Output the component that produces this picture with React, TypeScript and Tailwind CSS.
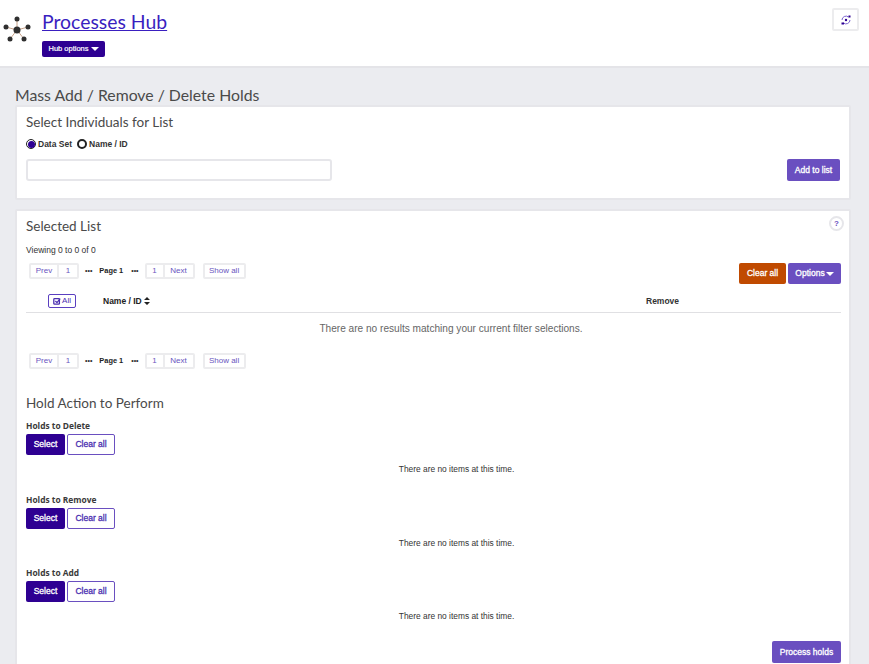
import React from "react";

const heading = "font-['Lato',sans-serif] font-normal text-[#4a4a4a]";
const btnText = "text-[8.5px] font-normal [-webkit-text-stroke:0.3px]";

function Pager() {
  const cell = "h-[12px] flex items-center justify-center text-[8px] text-[#6a55c0]";
  return (
    <div className="flex items-center h-[16px] ml-[3px]">
      <div className="flex border-2 border-[#ececee] rounded-[2px] box-content">
        <div className={`${cell} w-[28px] border-r-2 border-[#ececee]`}>Prev</div>
        <div className={`${cell} w-[18px]`}>1</div>
      </div>
      <span className="ml-[6px] text-[7px] font-bold text-[#333]">•••</span>
      <span className="ml-[7px] text-[7.4px] font-bold text-[#222]">Page 1</span>
      <span className="ml-[8px] text-[7px] font-bold text-[#333]">•••</span>
      <div className="ml-[6px] flex border-2 border-[#ececee] rounded-[2px] box-content">
        <div className={`${cell} w-[18px] border-r-2 border-[#ececee]`}>1</div>
        <div className={`${cell} w-[28px]`}>Next</div>
      </div>
      <div className={`${cell} ml-[8px] w-[39px] border-2 border-[#ececee] rounded-[2px] box-content`}>Show all</div>
    </div>
  );
}

function Caret({ className = "" }: { className?: string }) {
  return <span className={`inline-block w-0 h-0 border-x-[4px] border-x-transparent border-t-[4px] border-t-white ${className}`} />;
}

function HoldGroup({ title }: { title: string }) {
  return (
    <div className="h-[73.5px]">
      <div className="text-[8.4px] font-bold text-[#3a3a3a] leading-[12px] font-['Open_Sans',sans-serif]">{title}</div>
      <div className="flex gap-[2px] mt-[2px]">
        <button className={`w-[39px] h-[21px] bg-[#2e0092] text-white rounded-[2px] ${btnText}`}>Select</button>
        <button className={`w-[48px] h-[21px] bg-white border border-[#6a4fc0] text-[#4a2fb0] rounded-[2px] ${btnText}`}>Clear all</button>
      </div>
      <div className="text-center text-[8.4px] text-[#333] mt-[8px] leading-[12px] pl-[47px]">There are no items at this time.</div>
    </div>
  );
}

export default function App() {
  return (
    <div className="w-[869px] h-[664px] overflow-hidden bg-[#ebecf0] font-['Liberation_Sans',sans-serif]">
      <header className="h-[68px] bg-white border-b-2 border-[#e4e4e8] flex justify-between">
        <div className="flex">
          <svg width="30" height="30" viewBox="0 0 30 30" className="ml-[2px] mt-[15px]">
            <g stroke="#b98a6a" strokeWidth="0.8">
              <line x1="15" y1="15" x2="15" y2="4" />
              <line x1="15" y1="15" x2="26" y2="12" />
              <line x1="15" y1="15" x2="22" y2="24" />
              <line x1="15" y1="15" x2="8" y2="24" />
              <line x1="15" y1="15" x2="4" y2="12" />
            </g>
            <g fill="#2f2f2f">
              <circle cx="15" cy="15" r="3.5" />
              <circle cx="15" cy="4" r="2.5" />
              <circle cx="26" cy="12" r="2.5" />
              <circle cx="22" cy="24" r="2.5" />
              <circle cx="8" cy="24" r="2.5" />
              <circle cx="4" cy="12" r="2.5" />
            </g>
          </svg>
          <div className="ml-[10px] pt-[10px]">
            <a href="#" className="block text-[19.4px] leading-[24px] text-[#3a1fc0] underline font-['Lato',sans-serif]">Processes Hub</a>
            <button className="mt-[7px] h-[16px] w-[63px] bg-[#2e0092] rounded-[2px] text-white text-[7.5px] font-normal [-webkit-text-stroke:0.2px] flex items-center justify-center gap-[2px]">
              Hub options <Caret />
            </button>
          </div>
        </div>
        <button className="mt-[8px] mr-[10px] w-[27px] h-[23px] border-2 border-[#ececee] rounded-[2px] flex items-center justify-center">
          <svg width="12" height="12" viewBox="0 0 12 12" fill="none">
            <path d="M2 6a4 4 0 0 1 6.5-3M10 6a4 4 0 0 1-6.5 3" stroke="#7a63cf" strokeWidth="1" />
            <circle cx="6" cy="6" r="1.2" fill="#2e0092" />
            <rect x="8.5" y="1.5" width="2" height="2" fill="#2e0092" />
            <rect x="1.5" y="8.5" width="2.5" height="2" fill="#2e0092" />
          </svg>
        </button>
      </header>

      <main className="pl-[15px] pr-[18px]">
        <h1 className={`${heading} text-[15.8px] leading-[20px] pt-[17px] h-[37px]`}>Mass Add / Remove / Delete Holds</h1>

        <section className="h-[95px] bg-white border-2 border-[#e6e6ea] rounded-[2px] px-[9px] relative">
          <h2 className={`${heading} text-[13.5px] leading-[18px] pt-[6px] h-[23px]`}>Select Individuals for List</h2>
          <div className="flex items-center mt-[8px] h-[12px] text-[8.5px] font-bold text-[#333]">
            <span className="w-[10px] h-[10px] rounded-full border-[1.5px] border-[#222] flex items-center justify-center">
              <span className="w-[7px] h-[7px] rounded-full bg-[#2e0092]" />
            </span>
            <span className="ml-[2px]">Data Set</span>
            <span className="ml-[5px] w-[10px] h-[10px] rounded-full border-2 border-[#222]" />
            <span className="ml-[2px]">Name / ID</span>
          </div>
          <div className="flex justify-between items-center mt-[9px]">
            <input className="w-[306px] h-[22px] bg-white border-2 border-[#e6e6ea] rounded-[3px]" />
            <button className={`w-[53px] h-[22px] bg-[#6a4fc0] text-white rounded-[2px] ${btnText}`}>Add to list</button>
          </div>
        </section>

        <section className="mt-[9px] h-[470px] bg-white border-2 border-[#e6e6ea] rounded-[2px] px-[9px] relative">
          <h2 className={`${heading} text-[13.5px] leading-[18px] pt-[6px] h-[23px]`}>Selected List</h2>
          <span className="absolute right-[5px] top-[5px] w-[15px] h-[15px] rounded-full border-2 border-[#e6e6ea] flex items-center justify-center text-[8px] font-bold text-[#6a4fc0]">?</span>
          <div className="text-[8.5px] text-[#333] leading-[12px] mt-[10px]">Viewing 0 to 0 of 0</div>
          <div className="flex justify-between items-start mt-[7px]">
            <Pager />
            <div className="flex gap-[2px] mr-[-1px]">
              <button className={`w-[47px] h-[21px] bg-[#c04a00] text-white rounded-[2px] ${btnText}`}>Clear all</button>
              <button className={`w-[53px] h-[21px] bg-[#6a4fc0] text-white rounded-[2px] flex items-center justify-center gap-[1px] ${btnText}`}>Options <Caret /></button>
            </div>
          </div>
          <div className="flex items-center h-[23px] mt-[6px] border-b border-[#e0e0e3] mr-[-1px] relative">
            <button className="ml-[22px] w-[28px] h-[14px] border border-[#5a3fc0] rounded-[2px] flex items-center justify-center gap-[1px] text-[8px] text-[#4a2fb0]">
              <svg width="8" height="8" viewBox="0 0 10 10" fill="none" stroke="#4a2fb0" strokeWidth="1.6">
                <rect x="1" y="2" width="7" height="7" rx="1" />
                <path d="M3 5l2 2 4-5" />
              </svg>
              All
            </button>
            <span className="ml-[27px] text-[8.5px] font-bold text-[#222] flex items-center gap-[2px]">
              Name / ID
              <svg width="6" height="8" viewBox="0 0 6 8" fill="#222"><path d="M3 0l3 3H0zM3 8L0 5h6z" /></svg>
            </span>
            <span className="absolute left-[620px] text-[8.5px] font-bold text-[#333]">Remove</span>
          </div>
          <div className="h-[32px] flex items-center justify-center text-[10.1px] text-[#666] pl-[36px]">There are no results matching your current filter selections.</div>
          <div className="mt-[8px]"><Pager /></div>
          <h2 className={`${heading} text-[13.5px] leading-[18px] mt-[25px]`}>Hold Action to Perform</h2>
          <div className="mt-[8px]">
            <HoldGroup title="Holds to Delete" />
            <HoldGroup title="Holds to Remove" />
            <HoldGroup title="Holds to Add" />
          </div>
          <button className={`absolute right-[8px] top-[430px] w-[69px] h-[22px] bg-[#6a4fc0] text-white rounded-[2px] ${btnText}`}>Process holds</button>
        </section>
      </main>
    </div>
  );
}
